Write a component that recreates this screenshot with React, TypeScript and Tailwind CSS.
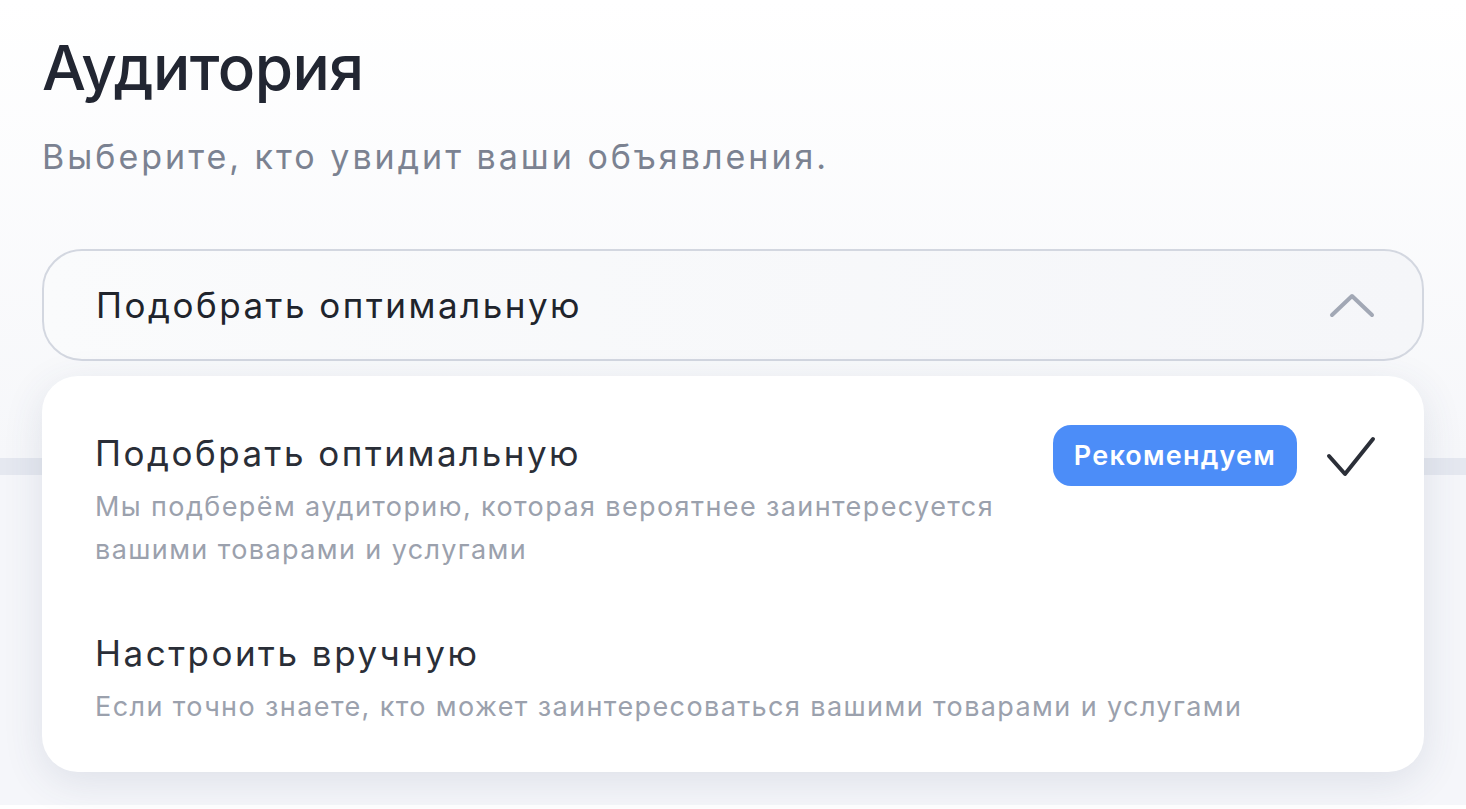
const font = { fontFamily: 'Inter, "Noto Sans", sans-serif' };

function CheckMark() {
  return (
    <svg width="50" height="44" viewBox="0 0 50 44" fill="none" className="text-[#2b2f38]">
      <path d="M3 22 L19 40 L47 5" stroke="currentColor" strokeWidth="4" strokeLinecap="round" strokeLinejoin="round" />
    </svg>
  );
}

function ChevronUp() {
  return (
    <svg width="46" height="26" viewBox="0 0 46 26" fill="none" className="text-[#a2a8b5]">
      <path d="M3 23 L23 4 L43 23" stroke="currentColor" strokeWidth="4" strokeLinecap="round" strokeLinejoin="round" />
    </svg>
  );
}

function Option({
  title,
  desc,
  selected,
  badge,
}: {
  title: string;
  desc: string[];
  selected?: boolean;
  badge?: string;
}) {
  return (
    <div className="flex items-start justify-between">
      <div className="flex flex-col">
        <div className="text-[35px] leading-[44px] tracking-[2.5px] text-[#2a2e37]">{title}</div>
        <div className="mt-[10px] text-[27px] leading-[43px] tracking-[1.4px] text-[#9ba1ad]">
          {desc.map((line) => (
            <div key={line}>{line}</div>
          ))}
        </div>
      </div>
      {selected && (
        <div className="-mt-[6px] -mr-[5px] flex items-center gap-[29px]">
          {badge && (
            <span className="rounded-[18px] bg-[#4c8df8] px-[21px] py-[12px] text-[27px] font-semibold leading-[37px] tracking-[1.2px] text-white">
              {badge}
            </span>
          )}
          <CheckMark />
        </div>
      )}
    </div>
  );
}

export default function App() {
  return (
    <div className="relative min-h-screen overflow-hidden bg-white" style={font}>
      <div className="bg-gradient-to-b from-white to-[#f6f7fa] px-[42px] pt-[33px] pb-[97px]">
        <h1 className="text-[62px] font-medium leading-[70px] tracking-[-0.5px] text-[#222632]">
          Аудитория
        </h1>
        <p className="mt-[32px] text-[34px] leading-[44px] tracking-[3px] text-[#7b8291]">
          Выберите, кто увидит ваши объявления.
        </p>

        <div className="relative mt-[70px]">
          <button className="flex h-[112px] w-full items-center justify-between rounded-[40px] border-2 border-[#d3d7e0] bg-gradient-to-r from-[#fafbfc] to-[#f5f6f9] pl-[52px] pr-[47px] text-left">
            <span className="text-[35px] tracking-[2.5px] text-[#20242c]">Подобрать оптимальную</span>
            <ChevronUp />
          </button>

          <div className="absolute left-0 right-0 top-[127px] z-10 rounded-[36px] bg-white px-[53px] pt-[55px] pb-[44px] shadow-[0_10px_40px_rgba(60,70,110,0.12)]">
            <Option
              title="Подобрать оптимальную"
              desc={[
                'Мы подберём аудиторию, которая вероятнее заинтересуется',
                'вашими товарами и услугами',
              ]}
              selected
              badge="Рекомендуем"
            />
            <div className="mt-[60px]">
              <Option
                title="Настроить вручную"
                desc={['Если точно знаете, кто может заинтересоваться вашими товарами и услугами']}
              />
            </div>
          </div>
        </div>
      </div>

      <div className="h-[17px] bg-[#e5e8f0]" />
      <div className="h-[330px] bg-[#f5f6fa]" />
    </div>
  );
}
